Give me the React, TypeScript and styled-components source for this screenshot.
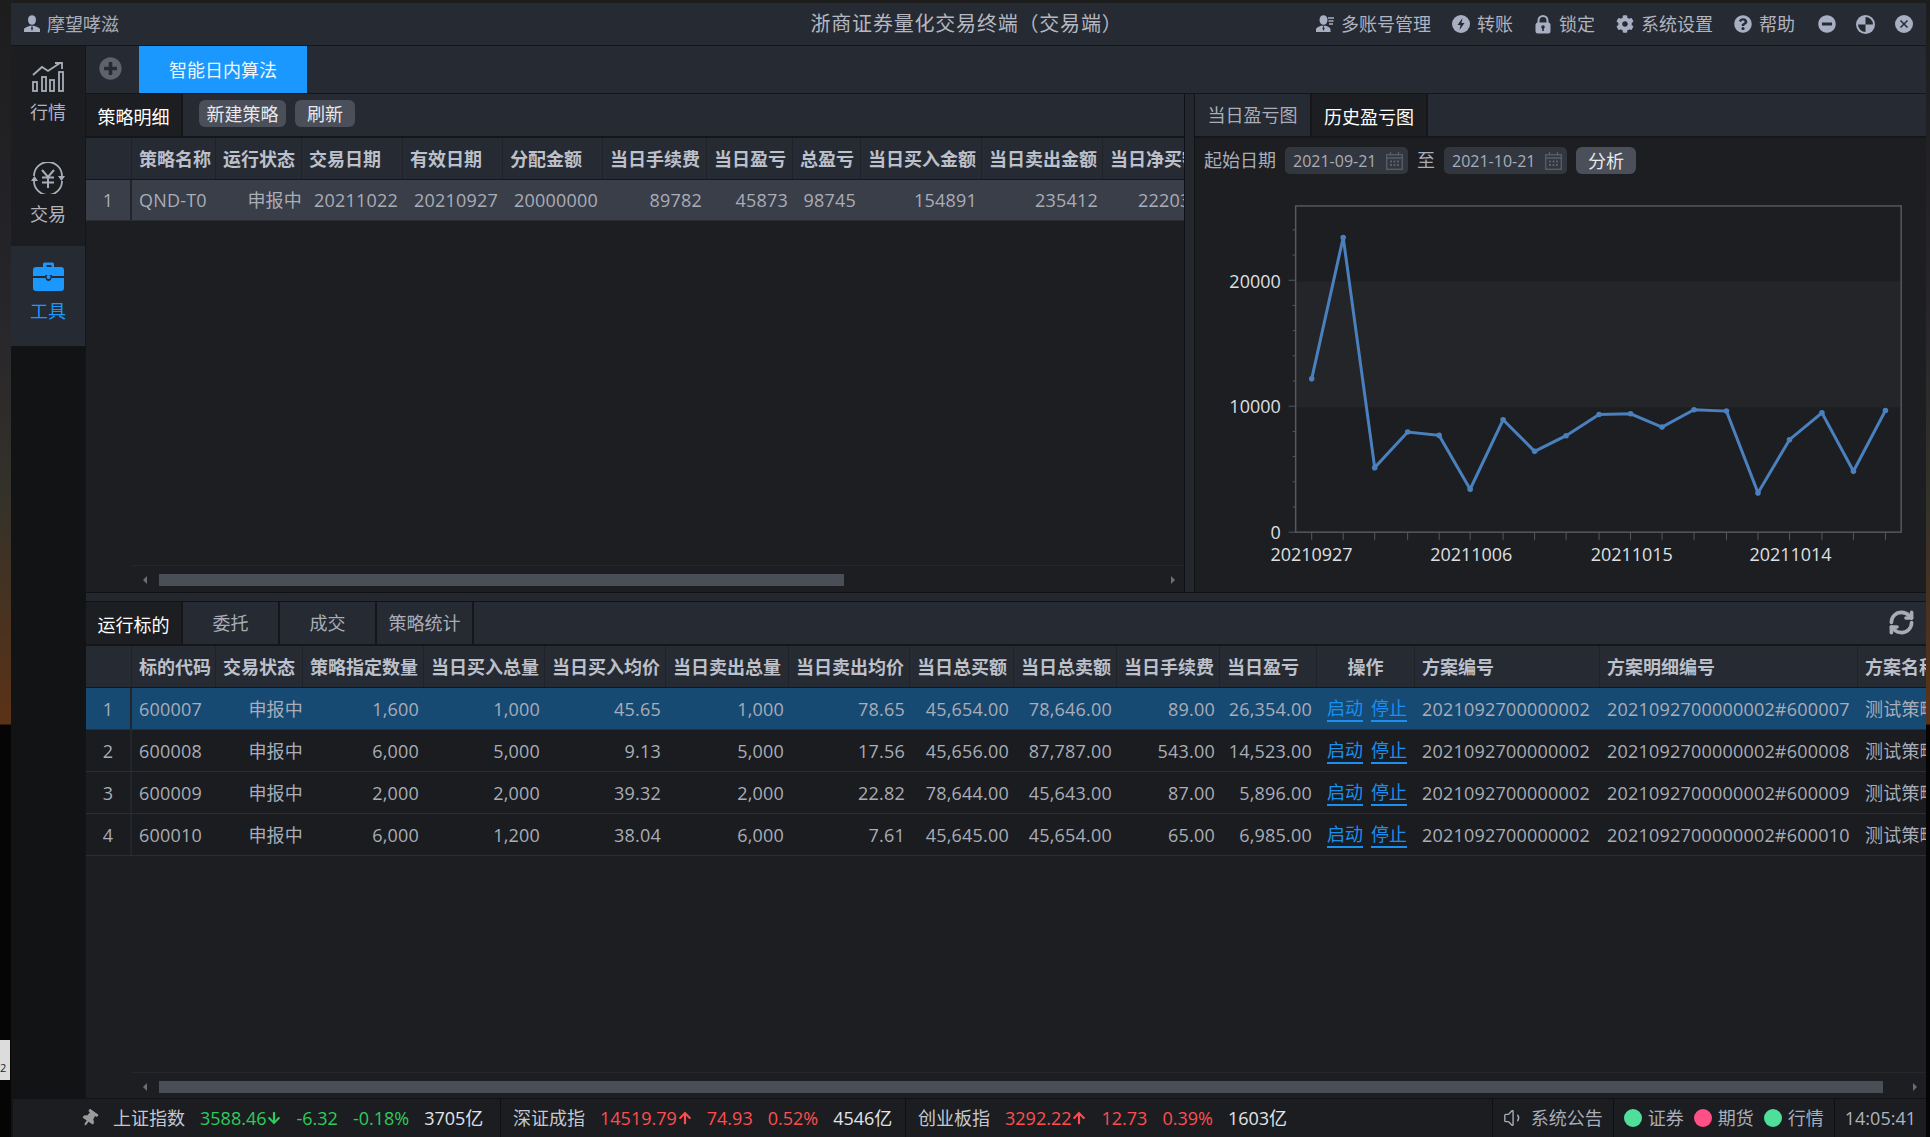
import React from 'react';
import styled, { createGlobalStyle } from 'styled-components';
import { FaArrowDown, FaArrowUp, FaCog, FaMinusCircle, FaPlusCircle, FaQuestionCircle, FaThumbtack } from 'react-icons/fa';
import { RefreshCw, Volume1 } from 'lucide-react';

const FONT = '"Open Sans", "Noto Sans CJK SC", sans-serif';

const GlobalStyle = createGlobalStyle`
  html, body {
    margin: 0;
    width: 1930px;
    height: 1137px;
    overflow: hidden;
    font-family: ${FONT};
    background: linear-gradient(180deg, #1d1d1e 0, #26252a 300px, #35322a 500px, #5c3216 724px, #050505 725px, #050505 100%);
  }
`;

const Frame = styled.div`
  display: flex;
  flex-direction: column;
  width: 1915px;
  height: 1134px;
  margin: 3px 0 0 11px;
  background: #121315;
  font-size: 18px;
  line-height: 1;
  color: #a9adb8;
`;

const DeskTag = styled.div`
  position: absolute;
  left: 0;
  top: 1040px;
  width: 10px;
  height: 40px;
  background: #dcdcdc;
  color: #222;
  font-size: 11px;
  display: flex;
  align-items: flex-end;
  padding-bottom: 5px;
  box-sizing: border-box;
`;

const TitleBar = styled.header`
  flex: none;
  display: grid;
  grid-template-columns: 1fr auto 1fr;
  align-items: center;
  height: 42px;
  background: #262a33;
  border-bottom: 1px solid #14161a;
`;

const UserBox = styled.div`
  display: flex;
  align-items: center;
  gap: 6px;
  padding-left: 12px;
`;

const AppTitle = styled.div`
  font-size: 20px;
  letter-spacing: 0.8px;
  color: #b4b8c2;
  padding-right: 4px;
`;

const ActionList = styled.div`
  display: flex;
  justify-content: flex-end;
  align-items: center;
  padding-right: 13px;
`;

const Action = styled.div`
  display: flex;
  align-items: center;
  gap: 7px;
  margin-left: 21px;
  color: #b0b4c0;
`;

const WindowButtons = styled.div`
  display: flex;
  gap: 20px;
  margin-left: 23px;
`;

const Body = styled.div`
  flex: 1;
  min-height: 0;
  display: flex;
`;

const Sidebar = styled.nav`
  flex: none;
  width: 75px;
  display: flex;
  flex-direction: column;
`;

const SideItem = styled.div<{ $active?: boolean }>`
  height: 100px;
  box-sizing: border-box;
  padding-top: 16px;
  display: flex;
  flex-direction: column;
  align-items: center;
  gap: 11px;
  border-right: 1px solid #14161a;
  background: ${(p) => (p.$active ? '#262a33' : '#1b1d21')};
  color: ${(p) => (p.$active ? '#1a98fe' : '#b0b4c0')};
`;

const Main = styled.main`
  flex: 1;
  min-width: 0;
  display: flex;
  flex-direction: column;
`;

const TabStrip = styled.div`
  flex: none;
  display: flex;
  height: 47px;
  background: #262a33;
  border-bottom: 1px solid #14161a;
`;

const AddSlot = styled.div`
  width: 53px;
  display: flex;
  justify-content: center;
  padding: 11px 4px 0 0;
  box-sizing: border-box;
  color: #5d626c;
`;

const AppTab = styled.div`
  width: 168px;
  display: flex;
  align-items: center;
  justify-content: center;
  background: #1a98fe;
  color: #eef6ff;
`;

const UpperArea = styled.div`
  flex: none;
  height: 498px;
  display: flex;
`;

const Pane = styled.section`
  flex: 1;
  min-width: 0;
  display: flex;
  flex-direction: column;
  overflow: hidden;
  background: #1c1e22;
`;

const LeftPane = styled(Pane)`
  flex: none;
  width: 1098px;
`;

const Gutter = styled.div`
  flex: none;
  width: 11px;
  background: #24272e;
  border-left: 1px solid #111215;
  border-right: 1px solid #111215;
  box-sizing: border-box;
`;

const HStrip = styled.div`
  flex: none;
  height: 10px;
  background: #24272e;
  border-top: 1px solid #111215;
  border-bottom: 1px solid #111215;
  box-sizing: border-box;
`;

const SubBar = styled.div`
  flex: none;
  display: flex;
  align-items: stretch;
  height: 42px;
  background: #262a33;
  border-bottom: 2px solid #14161a;
`;

const SubTab = styled.div<{ $active?: boolean; $w?: number }>`
  width: ${(p) => p.$w ?? 95}px;
  margin-right: 2px;
  display: flex;
  align-items: center;
  justify-content: center;
  padding-top: ${(p) => (p.$active ? 3 : 0)}px;
  box-sizing: border-box;
  background: ${(p) => (p.$active ? '#1c1e22' : '#262a33')};
  color: ${(p) => (p.$active ? '#ffffff' : '#a9adb8')};
  box-shadow: 2px 0 0 #14161a;
`;

const BarButtons = styled.div`
  display: flex;
  gap: 9px;
  padding: 6px 0 0 16px;
`;

const SmallButton = styled.button<{ $w: number }>`
  width: ${(p) => p.$w}px;
  height: 27px;
  padding: 0;
  border: 0;
  border-radius: 6px;
  background: #4b4f5a;
  color: #e8e9ec;
  font: inherit;
`;

const DataRow = styled.div<{ $cols: string; $tone?: 'head' | 'selected' | 'soft'; $h: number }>`
  flex: none;
  box-sizing: border-box;
  display: grid;
  grid-template-columns: ${(p) => p.$cols};
  height: ${(p) => p.$h}px;
  border-bottom: 1px solid ${(p) => (p.$tone === 'head' ? '#14161a' : '#2a2d33')};
  background: ${(p) =>
    p.$tone === 'head' ? '#262a33' : p.$tone === 'selected' ? '#174a72' : p.$tone === 'soft' ? '#3a3e49' : '#1a1c1f'};
`;

const Cell = styled.div<{ $align?: 'left' | 'right' | 'center' | 'flush' }>`
  display: flex;
  align-items: center;
  min-width: 0;
  overflow: hidden;
  white-space: nowrap;
  letter-spacing: 0.2px;
  padding: ${(p) => (p.$align === 'right' ? '0 5px 0 0' : p.$align === 'flush' ? '0' : p.$align === 'center' ? '0' : '0 0 0 7px')};
  justify-content: ${(p) => (p.$align === 'right' || p.$align === 'flush' ? 'flex-end' : p.$align === 'center' ? 'center' : 'flex-start')};
`;

const HeadCell = styled(Cell)`
  font-weight: 700;
  letter-spacing: 0;
  color: #bcc0ca;
  border-right: 1px solid #1f2229;
`;

const IndexCell = styled(Cell)`
  justify-content: center;
  padding: 0;
  border-right: 2px solid #22252b;
`;

const ActionCell = styled(Cell)`
  gap: 8px;
  justify-content: center;
  padding: 0 0 0 2px;
`;

const OpLink = styled.a`
  color: #1a8ff0;
  padding-bottom: 3px;
  border-bottom: 2px solid #1a8ff0;
  letter-spacing: 0;
  margin-top: 3px;
`;

const Filler = styled.div`
  flex: 1;
  min-height: 0;
`;

const ScrollTrack = styled.div<{ $h: number }>`
  flex: none;
  height: ${(p) => p.$h}px;
  box-sizing: border-box;
  margin-left: 46px;
  padding: 8px 0 0 11px;
  display: flex;
  align-items: flex-start;
  border-top: 1px solid #25272d;
`;

const ScrollThumb = styled.div<{ $w: number; $gap: number }>`
  width: ${(p) => p.$w}px;
  height: 12px;
  margin: 0 ${(p) => p.$gap}px 0 12px;
  background: #4a4e56;
`;

const ScrollArrow = styled.span<{ $dir: 'left' | 'right' }>`
  margin-top: 2px;
  width: 0;
  height: 0;
  border-top: 4px solid transparent;
  border-bottom: 4px solid transparent;
  ${(p) => (p.$dir === 'left' ? 'border-right: 4px solid #6a6e76;' : 'border-left: 4px solid #6a6e76;')}
`;

const FilterRow = styled.div`
  flex: none;
  height: 42px;
  box-sizing: border-box;
  padding: 9px 0 0 9px;
  display: flex;
  align-items: flex-start;
  gap: 9px;
  span {
    line-height: 27px;
  }
`;

const DateBox = styled.div`
  width: 123px;
  height: 27px;
  box-sizing: border-box;
  padding: 0 5px 0 8px;
  display: flex;
  align-items: center;
  justify-content: space-between;
  border-radius: 5px;
  background: #32363f;
  font-size: 16px;
  color: #a9adb8;
`;

const LowerBar = styled(SubBar)`
  position: relative;
`;

const RefreshSlot = styled.div`
  position: absolute;
  right: 11px;
  top: 7px;
  color: #a8acb8;
`;

const StatusBar = styled.footer`
  flex: none;
  height: 39px;
  margin-left: 2px;
  display: flex;
  align-items: stretch;
  background: #1b1d21;
  border-top: 1px solid #111215;
  box-sizing: border-box;
`;

const IndexGroup = styled.div<{ $w?: number; $pad: number }>`
  ${(p) => (p.$w ? `width: ${p.$w}px; flex: none;` : 'flex: 1;')}
  box-sizing: border-box;
  padding-left: ${(p) => p.$pad}px;
  display: flex;
  align-items: center;
  gap: 15px;
  border-right: 1px solid #0f1012;
  color: #c4c8d0;
`;

const Quote = styled.span<{ $tone: 'up' | 'down' }>`
  display: inline-flex;
  align-items: center;
  gap: 1px;
  color: ${(p) => (p.$tone === 'up' ? '#ff4d4f' : '#2ecc5a')};
`;

const Volume = styled.span`
  color: #e2e4e8;
`;

const StatusCell = styled.div`
  flex: none;
  display: flex;
  align-items: center;
  gap: 6px;
  padding: 0 10px;
  border-right: 1px solid #0f1012;
  color: #a9adb8;
`;

const LinkDot = styled.i<{ $on: boolean }>`
  width: 18px;
  height: 18px;
  border-radius: 50%;
  margin-left: 4px;
  background: ${(p) => (p.$on ? '#4fdf9b' : '#ff4f87')};
  &:first-child {
    margin-left: 0;
  }
`;

const Clock = styled.div`
  padding: 0 10px;
  display: flex;
  align-items: center;
  color: #b0b4be;
`;

const ICON = '#a9afc2';
const DARK = '#262a33';

const Bust: React.FC<{ lines?: boolean }> = ({ lines }) => (
  <svg width="18" height="18" viewBox="0 0 18 18">
    <ellipse cx={lines ? 7.5 : 9} cy="5" rx="4" ry="4.8" fill={ICON} />
    <path d={lines ? 'M0 17v-2.5c0-2 3-3 5-3.8h5c2 .8 4.500 1.800 4.500 3.800V17z' : 'M1 17v-2.500c0-2 4-3 6-3.800h4c2 .8 6 1.800 6 3.800V17z'} fill={ICON} />
    <path d={lines ? 'M7.500 10.500l-1 3 1 2.500 1-2.500z' : 'M9 10.500l-1 3 1 2.500 1-2.500z'} fill={DARK} />
    {lines && <path d="M12 3h6M12.500 6h5M13 9h4" stroke={ICON} strokeWidth="1.300" />}
  </svg>
);

const Bolt = () => (
  <svg width="18" height="18" viewBox="0 0 18 18">
    <circle cx="9" cy="9" r="9" fill={ICON} />
    <path d="M10.500 3L5.500 10h3l-1 5 5-7h-3z" fill={DARK} />
  </svg>
);

const Lock = () => (
  <svg width="18" height="19" viewBox="0 0 18 19">
    <path d="M4.500 8V5.500a4.500 4.500 0 0 1 9 0V8" fill="none" stroke={ICON} strokeWidth="2" />
    <rect x="1.500" y="7.500" width="15" height="11" rx="2.500" fill={ICON} />
    <circle cx="9" cy="12" r="1.800" fill={DARK} />
    <rect x="8.200" y="12" width="1.600" height="4" fill={DARK} />
  </svg>
);

const MoveBall = () => (
  <svg width="19" height="19" viewBox="0 0 19 19">
    <circle cx="9.500" cy="9.500" r="9.500" fill={ICON} />
    <path d="M9.500 2v7.500H17A7.500 7.500 0 0 0 9.500 2zM9.500 9.500H2A7.500 7.500 0 0 0 9.500 17z" fill={DARK} />
  </svg>
);

const CloseBall = () => (
  <svg width="18" height="18" viewBox="0 0 18 18">
    <circle cx="9" cy="9" r="9" fill={ICON} />
    <path d="M5.500 5.500l7 7M12.500 5.500l-7 7" stroke={DARK} strokeWidth="1.500" />
  </svg>
);

const MarketIcon = () => (
  <svg width="32" height="30" viewBox="0 0 32 30" fill="none" stroke="#a9adb8" strokeWidth="1.800">
    <path d="M1 13l9-8 6 4 12-8" />
    <path d="M23 1h7v6" />
    <rect x="1" y="20" width="4" height="9" />
    <rect x="10" y="15" width="4" height="14" />
    <rect x="18" y="18" width="4" height="11" />
    <rect x="27" y="10" width="4" height="19" />
  </svg>
);

const TradeIcon = () => (
  <svg width="34" height="32" viewBox="0 0 34 32" fill="none" stroke="#a9adb8" strokeWidth="1.800">
    <path d="M3 14A14 14 0 0 1 31 14" />
    <path d="M31 19A14 14 0 0 1 3 19" />
    <path d="M27 14h7l-3.500 5zM0 19h7l-3.500-5z" fill="#a9adb8" stroke="none" />
    <path d="M11 8l6 7 6-7M17 15v11M11 15.500h12M11 20.500h12" strokeWidth="2" />
  </svg>
);

const ToolIcon = () => (
  <svg width="31" height="29" viewBox="0 0 31 29">
    <path d="M10 5V2a1.500 1.500 0 0 1 1.500-1.500h8A1.500 1.500 0 0 1 21 2v3h-2.500V3h-5v2z" fill="#1a98fe" />
    <path d="M3 5h25a3 3 0 0 1 3 3v6H19v-1h-7v1H0V8a3 3 0 0 1 3-3z" fill="#1a98fe" />
    <path d="M0 16h12.500c.3 2 1.400 3 3 3s2.700-1 3-3H31v10a3 3 0 0 1-3 3H3a3 3 0 0 1-3-3z" fill="#1a98fe" />
    <rect x="13.500" y="13" width="4" height="4" rx="2" fill="#1a98fe" />
  </svg>
);

const CalendarIcon = () => (
  <svg width="17" height="18" viewBox="0 0 17 18" fill="none" stroke="#5a5f69" strokeWidth="1.300">
    <rect x=".7" y="2.700" width="15.600" height="14.600" />
    <path d="M.7 6h15.600M4.500 0v3.500M12.500 0v3.500" />
    <path d="M4 9.500h2M7.500 9.500h2M11 9.500h2M4 13h2M7.500 13h2M11 13h2" strokeWidth="1.800" />
  </svg>
);

// plot coordinates inside the chart svg, whose corner sits at page (1195, 180)
const PLOT = { left: 100, right: 707, top: 25, bottom: 352 };
const SERIES = [595, 170, 862, 755, 765, 927, 718, 813, 766, 702, 700, 740, 688, 692, 938, 778, 697, 873, 690];
const XS = [274, 340, 406, 475, 541, 606, 675, 741, 807, 876, 942, 1008, 1075, 1143, 1209, 1275, 1343, 1409, 1476];

const chartX = (zoomX: number) => zoomX / 2.09 - 15;
const chartY = (zoomY: number) => zoomY / 3;

const PnlChart = () => {
  const pts = SERIES.map((y, i) => [chartX(XS[i]), chartY(y)]);
  const ticks = Array.from({ length: 13 }, (_, i) => PLOT.bottom - i * 25.25);
  return (
    <svg width="731" height="412" viewBox="0 0 731 412" style={{ display: 'block', marginTop: 1 }}>
      <rect x={PLOT.left} y={100.5} width={PLOT.right - PLOT.left} height={126.5} fill="#232528" />
      <rect x={PLOT.left} y={PLOT.top} width={PLOT.right - PLOT.left} height={PLOT.bottom - PLOT.top} fill="none" stroke="#55585c" strokeWidth="1.500" />
      {ticks.map((y, i) => (
        <line key={i} x1={i % 5 === 0 ? PLOT.left - 7 : PLOT.left - 3} x2={PLOT.left} y1={y} y2={y} stroke="#55585c" />
      ))}
      {pts.map(([x], i) => (
        <line key={i} x1={x} x2={x} y1={PLOT.bottom} y2={PLOT.bottom + 8} stroke="#55585c" />
      ))}
      <polyline points={pts.map((p) => p.join(',')).join(' ')} fill="none" stroke="#4a80bd" strokeWidth="3" />
      {pts.map(([x, y], i) => (
        <circle key={i} cx={x} cy={y} r="2.800" fill="#4a80bd" />
      ))}
      <g fill="#dfe0e2" fontSize="18" fontFamily={FONT}>
        <text x="85" y="107" textAnchor="end">20000</text>
        <text x="85" y="233" textAnchor="end">10000</text>
        <text x="85" y="359" textAnchor="end">0</text>
        <text x="116" y="381" textAnchor="middle">20210927</text>
        <text x="276" y="381" textAnchor="middle">20211006</text>
        <text x="437" y="381" textAnchor="middle">20211015</text>
        <text x="596" y="381" textAnchor="middle">20211014</text>
      </g>
    </svg>
  );
};

const STRATEGY_COLS = '46px 84px 86px 101px 100px 100px 104px 86px 68px 121px 121px 103px';
const STRATEGY_HEAD = ['', '策略名称', '运行状态', '交易日期', '有效日期', '分配金额', '当日手续费', '当日盈亏', '总盈亏', '当日买入金额', '当日卖出金额', '当日净买额'];
const STRATEGY_ROW = ['20211022', '20210927', '20000000', '89782', '45873', '98745', '154891', '235412', '222031'];

const ORDER_COLS = '46px 84px 87px 121px 121px 121px 123px 121px 104px 103px 103px 97px 98px 185px 258px 120px';
const ORDER_HEAD = ['', '标的代码', '交易状态', '策略指定数量', '当日买入总量', '当日买入均价', '当日卖出总量', '当日卖出均价', '当日总买额', '当日总卖额', '当日手续费', '当日盈亏'];
const ORDER_ROWS = [
  ['600007', '1,600', '1,000', '45.65', '1,000', '78.65', '45,654.00', '78,646.00', '89.00', '26,354.00'],
  ['600008', '6,000', '5,000', '9.13', '5,000', '17.56', '45,656.00', '87,787.00', '543.00', '14,523.00'],
  ['600009', '2,000', '2,000', '39.32', '2,000', '22.82', '78,644.00', '45,643.00', '87.00', '5,896.00'],
  ['600010', '6,000', '1,200', '38.04', '6,000', '7.61', '45,645.00', '45,654.00', '65.00', '6,985.00'],
];

const INDEXES = [
  { name: '上证指数', tone: 'down' as const, price: '3588.46', change: '-6.32', pct: '-0.18%', vol: '3705亿', w: 488, pad: 68 },
  { name: '深证成指', tone: 'up' as const, price: '14519.79', change: '74.93', pct: '0.52%', vol: '4546亿', w: 405, pad: 12 },
  { name: '创业板指', tone: 'up' as const, price: '3292.22', change: '12.73', pct: '0.39%', vol: '1603亿', pad: 12 },
];

export default function App() {
  return (
    <>
      <GlobalStyle />
      <DeskTag>2</DeskTag>
      <Frame>
        <TitleBar>
          <UserBox>
            <Bust />
            <span>摩望哮滋</span>
          </UserBox>
          <AppTitle>浙商证券量化交易终端（交易端）</AppTitle>
          <ActionList>
            <Action><Bust lines />多账号管理</Action>
            <Action><Bolt />转账</Action>
            <Action><Lock />锁定</Action>
            <Action><FaCog size={18} color={ICON} />系统设置</Action>
            <Action><FaQuestionCircle size={18} color={ICON} />帮助</Action>
            <WindowButtons>
              <FaMinusCircle size={18} color={ICON} />
              <MoveBall />
              <CloseBall />
            </WindowButtons>
          </ActionList>
        </TitleBar>

        <Body>
          <Sidebar>
            <SideItem><MarketIcon />行情</SideItem>
            <SideItem><TradeIcon />交易</SideItem>
            <SideItem $active><ToolIcon />工具</SideItem>
          </Sidebar>

          <Main>
            <TabStrip>
              <AddSlot><FaPlusCircle size={23} /></AddSlot>
              <AppTab>智能日内算法</AppTab>
            </TabStrip>

            <UpperArea>
              <LeftPane>
                <SubBar>
                  <SubTab $active>策略明细</SubTab>
                  <BarButtons>
                    <SmallButton $w={87}>新建策略</SmallButton>
                    <SmallButton $w={60}>刷新</SmallButton>
                  </BarButtons>
                </SubBar>
                <DataRow $cols={STRATEGY_COLS} $tone="head" $h={42}>
                  {STRATEGY_HEAD.map((h, i) => (
                    <HeadCell key={i}>{h}</HeadCell>
                  ))}
                </DataRow>
                <DataRow $cols={STRATEGY_COLS} $tone="soft" $h={41}>
                  <IndexCell>1</IndexCell>
                  <Cell>QND-T0</Cell>
                  <Cell $align="flush">申报中</Cell>
                  {STRATEGY_ROW.map((v) => (
                    <Cell key={v} $align="right">{v}</Cell>
                  ))}
                </DataRow>
                <Filler />
                <ScrollTrack $h={27}>
                  <ScrollArrow $dir="left" />
                  <ScrollThumb $w={685} $gap={327} />
                  <ScrollArrow $dir="right" />
                </ScrollTrack>
              </LeftPane>
              <Gutter />
              <Pane>
                <SubBar>
                  <SubTab $w={115}>当日盈亏图</SubTab>
                  <SubTab $w={114} $active>历史盈亏图</SubTab>
                </SubBar>
                <FilterRow>
                  <span>起始日期</span>
                  <DateBox>2021-09-21<CalendarIcon /></DateBox>
                  <span>至</span>
                  <DateBox>2021-10-21<CalendarIcon /></DateBox>
                  <SmallButton $w={60}>分析</SmallButton>
                </FilterRow>
                <PnlChart />
              </Pane>
            </UpperArea>

            <HStrip />

            <Pane>
              <LowerBar>
                <SubTab $active>运行标的</SubTab>
                <SubTab>委托</SubTab>
                <SubTab>成交</SubTab>
                <SubTab>策略统计</SubTab>
                <RefreshSlot><RefreshCw size={27} strokeWidth={3.2} /></RefreshSlot>
              </LowerBar>
              <DataRow $cols={ORDER_COLS} $tone="head" $h={42}>
                {ORDER_HEAD.map((h, i) => (
                  <HeadCell key={i}>{h}</HeadCell>
                ))}
                <HeadCell $align="center">操作</HeadCell>
                <HeadCell>方案编号</HeadCell>
                <HeadCell>方案明细编号</HeadCell>
                <HeadCell>方案名称</HeadCell>
              </DataRow>
              {ORDER_ROWS.map((row, i) => (
                <DataRow key={row[0]} $cols={ORDER_COLS} $tone={i === 0 ? 'selected' : undefined} $h={42}>
                  <IndexCell>{i + 1}</IndexCell>
                  <Cell>{row[0]}</Cell>
                  <Cell $align="flush">申报中</Cell>
                  {row.slice(1).map((v, j) => (
                    <Cell key={j} $align="right">{v}</Cell>
                  ))}
                  <ActionCell>
                    <OpLink>启动</OpLink>
                    <OpLink>停止</OpLink>
                  </ActionCell>
                  <Cell>2021092700000002</Cell>
                  <Cell>2021092700000002#{row[0]}</Cell>
                  <Cell>测试策略</Cell>
                </DataRow>
              ))}
              <Filler />
              <ScrollTrack $h={26}>
                <ScrollArrow $dir="left" />
                <ScrollThumb $w={1724} $gap={30} />
                <ScrollArrow $dir="right" />
              </ScrollTrack>
            </Pane>
          </Main>
        </Body>

        <StatusBar>
          {INDEXES.map((q, i) => (
            <IndexGroup key={q.name} $w={q.w} $pad={q.pad}>
              {i === 0 && <FaThumbtack size={17} color="#9a9a9a" style={{ transform: 'rotate(35deg)' }} />}
              {q.name}
              <Quote $tone={q.tone}>
                {q.price}
                {q.tone === 'up' ? <FaArrowUp size={14} /> : <FaArrowDown size={14} />}
              </Quote>
              <Quote $tone={q.tone}>{q.change}</Quote>
              <Quote $tone={q.tone}>{q.pct}</Quote>
              <Volume>{q.vol}</Volume>
            </IndexGroup>
          ))}
          <StatusCell>
            <Volume1 size={22} strokeWidth={1.5} />
            系统公告
          </StatusCell>
          <StatusCell>
            <LinkDot $on />证券
            <LinkDot $on={false} />期货
            <LinkDot $on />行情
          </StatusCell>
          <Clock>14:05:41</Clock>
        </StatusBar>
      </Frame>
    </>
  );
}
